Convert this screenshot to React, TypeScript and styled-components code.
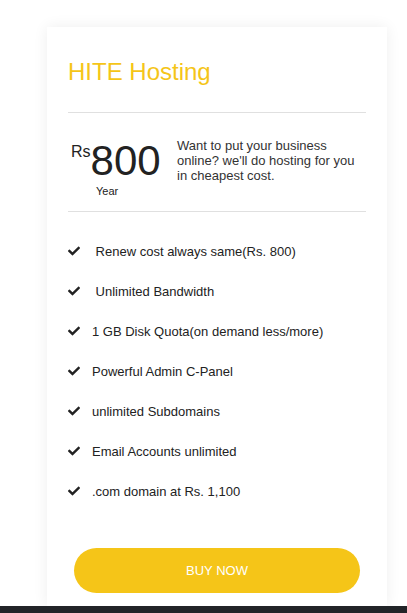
import React from "react";
import styled, { createGlobalStyle } from "styled-components";
import { FaCheck } from "react-icons/fa";

const Global = createGlobalStyle`
  html, body { margin: 0; padding: 0; background: #fff; overflow: hidden; }
  body { font-family: "Liberation Sans", Arial, sans-serif; }
`;

const Page = styled.div`
  display: flex;
  flex-direction: column;
  min-height: 613px;
`;

const Stage = styled.div`
  padding: 27px 0 0 47px;
  display: flex;
`;

const Card = styled.div`
  width: 340px;
  box-sizing: border-box;
  background: #fff;
  box-shadow: 0 0 14px rgba(0, 0, 0, 0.07);
  padding: 31px 21px 13px 21px;
  display: flex;
  flex-direction: column;
`;

const Title = styled.h2`
  margin: 0;
  font-size: 24px;
  line-height: 28px;
  font-weight: 400;
  color: #f5c518;
`;

const Divider = styled.hr<{ $top: number }>`
  border: 0;
  border-top: 1px solid #e0e0e0;
  margin: ${(p) => p.$top}px 0 0 0;
  height: 0;
`;

const PriceRow = styled.div`
  display: flex;
  align-items: flex-start;
  padding-top: 27px;
  height: 71px;
`;

const PriceBlock = styled.div`
  display: flex;
  flex-direction: column;
  margin-left: 3px;
  width: 106px;
`;

const Amount = styled.div`
  display: flex;
  align-items: flex-start;
  color: #222;
`;

const Currency = styled.span`
  font-size: 16px;
  line-height: 16px;
  margin-top: 4px;
`;

const Value = styled.span`
  font-size: 42px;
  line-height: 42px;
`;

const Period = styled.span`
  font-size: 11px;
  line-height: 13px;
  color: #222;
  margin: 3px 0 0 25px;
`;

const Description = styled.p`
  margin: -2px 0 0 0;
  width: 187px;
  font-size: 13px;
  line-height: 15px;
  color: #333;
`;

const Features = styled.ul`
  list-style: none;
  margin: 19px 0 0 0;
  padding: 0;
  display: flex;
  flex-direction: column;
`;

const Feature = styled.li`
  height: 40px;
  display: flex;
  align-items: center;
  font-size: 13px;
  color: #222;
`;

const Check = styled(FaCheck)`
  width: 12px;
  height: 12px;
  color: #222;
  margin-right: 12px;
  flex-shrink: 0;
`;

const BuyButton = styled.button`
  margin: 37px 6px 0 6px;
  height: 45px;
  border: 0;
  border-radius: 23px;
  background: #f5c518;
  color: #fff;
  font-family: "Liberation Sans", Arial, sans-serif;
  font-size: 13px;
  cursor: pointer;
`;

const Footer = styled.div`
  height: 20px;
  background: #222428;
`;

const features = [
  "\u00a0Renew cost always same(Rs. 800)",
  "\u00a0Unlimited Bandwidth",
  "1 GB Disk Quota(on demand less/more)",
  "Powerful Admin C-Panel",
  "unlimited Subdomains",
  "Email Accounts unlimited",
  ".com domain at Rs. 1,100",
];

export default function App() {
  return (
    <Page>
      <Global />
      <Stage>
        <Card>
          <Title>HITE Hosting</Title>
          <Divider $top={26} />
          <PriceRow>
            <PriceBlock>
              <Amount>
                <Currency>Rs</Currency>
                <Value>800</Value>
              </Amount>
              <Period>Year</Period>
            </PriceBlock>
            <Description>
              Want to put your business online? we'll do hosting for you in
              cheapest cost.
            </Description>
          </PriceRow>
          <Divider $top={0} />
          <Features>
            {features.map((f) => (
              <Feature key={f}>
                <Check />
                {f}
              </Feature>
            ))}
          </Features>
          <BuyButton>BUY NOW</BuyButton>
        </Card>
      </Stage>
      <Footer />
    </Page>
  );
}
